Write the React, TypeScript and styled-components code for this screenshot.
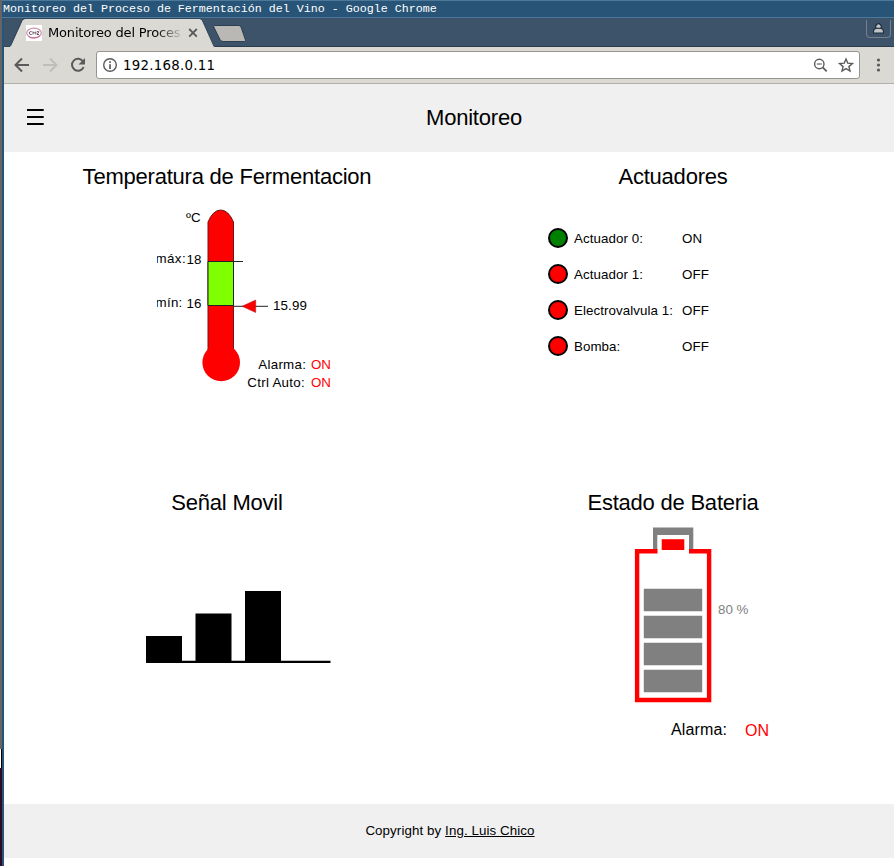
import React from "react";
import styled, { createGlobalStyle } from "styled-components";

const Global = createGlobalStyle`
  * { box-sizing: border-box; }
  html, body { margin: 0; padding: 0; overflow: hidden; }
  body { background: #fff; color: #000; font-family: "Liberation Sans", Arial, sans-serif; }
`;

const Desktop = styled.div`
  display: flex;
  width: 894px;
  height: 866px;
  overflow: hidden;
`;
const Backdrop = styled.div`
  display: flex;
  flex-direction: column;
  width: 2px;
  background: #656565;
`;
const BackdropPiece = styled.span<{ $height: number; $fill: string }>`
  height: ${(p) => p.$height}px;
  background: ${(p) => p.$fill};
`;
const Frame = styled.div`
  width: 892px;
  height: 866px;
  border-left: 2px solid #285577;
`;
const TitleBar = styled.div`
  height: 18px;
  margin-left: -2px;
  padding-left: 1px;
  border-top: 1px solid #4c7899;
  border-bottom: 1px solid #4c7899;
  background: #285577;
  color: #fff;
  font: 11.67px/16px "Liberation Mono", monospace;
  white-space: pre;
`;
const TabStrip = styled.div`
  display: flex;
  justify-content: space-between;
  height: 29px;
  background: #3d5369;
  border-bottom: 1px solid #293b4d;
`;
const Tabs = styled.div`
  display: grid;
  grid-template-columns: 250px;
  height: 29px;
  & > * { grid-area: 1 / 1; }
`;
const TabContent = styled.div`
  display: flex;
  align-items: center;
  height: 29px;
  padding-left: 22px;
`;
const TabTitle = styled.span`
  width: 134px;
  margin-left: 6px;
  white-space: nowrap;
  font: 13px/29px "DejaVu Sans", sans-serif;
  letter-spacing: -0.17px;
  mask-image: linear-gradient(to right, #000 108px, transparent 136px);
`;
const UserButton = styled.div`
  display: flex;
  justify-content: center;
  width: 25px;
  height: 18px;
  margin: 2px 3px 0 0;
  padding-top: 2px;
  border: 1px solid #75818e;
  border-top: 0;
  border-radius: 0 0 4px 4px;
`;
const Toolbar = styled.div`
  display: flex;
  align-items: center;
  height: 37px;
  padding-left: 8px;
  background: #dbd9d4;
  border-bottom: 1px solid #b3b1ad;
  & > * { flex-shrink: 0; }
`;
const AddressBar = styled.div`
  display: flex;
  align-items: center;
  width: 764px;
  height: 28px;
  margin-left: 8px;
  padding: 0 4px 0 5px;
  border: 1px solid #979591;
  border-radius: 3px;
  background: #fff;
`;
const Address = styled.span`
  flex: 1;
  margin-left: 5px;
  padding-top: 1px;
  font: 13.33px/26px "DejaVu Sans", sans-serif;
  letter-spacing: 0.27px;
`;
const Header = styled.header`
  display: flex;
  height: 68px;
  padding-left: 22px;
  background: #f0f0f0;
  line-height: 67px;
`;
const MenuButton = styled.span`
  display: flex;
  align-items: center;
  width: 28px;
`;
const PageTitle = styled.h1`
  flex: 1;
  margin: 0;
  font-size: 22px;
  font-weight: 400;
  letter-spacing: -0.22px;
  text-align: center;
`;
const Dashboard = styled.main`
  display: grid;
  grid-template-columns: 446px 446px;
  grid-template-rows: 326px 326px;
  height: 652px;
`;
const Panel = styled.section`
  display: flex;
  flex-direction: column;
  min-width: 0;
`;
const PanelTitle = styled.h2`
  margin: 0;
  height: 50px;
  font-size: 22px;
  font-weight: 400;
  letter-spacing: -0.22px;
  line-height: 49px;
  text-align: center;
`;
const Chart = styled.svg`
  display: block;
  width: 446px;
  height: 276px;
  overflow: visible;
  font-family: "Liberation Sans", Arial, sans-serif;
  font-size: 13.33px;
`;
const ActuatorList = styled.ul`
  margin: 0;
  padding: 18px 0 0 98px;
  list-style: none;
`;
const Actuator = styled.li`
  display: grid;
  grid-template-columns: 26px 108px 60px;
  align-items: center;
  height: 36px;
  font-size: 13.33px;
  letter-spacing: 0.07px;
`;
const Lamp = styled.span<{ $on: boolean }>`
  width: 20px;
  height: 20px;
  border: 2px solid #000;
  border-radius: 50%;
  background: ${(p) => (p.$on ? "#008000" : "#f00")};
`;
const Footer = styled.footer`
  height: 54px;
  padding-left: 2px;
  background: #f0f0f0;
  font-size: 13.33px;
  letter-spacing: 0.09px;
  line-height: 53px;
  text-align: center;
`;
const AuthorLink = styled.a`
  color: #000;
  text-decoration: underline;
`;

const actuators = [
  { name: "Actuador 0:", on: true },
  { name: "Actuador 1:", on: false },
  { name: "Electrovalvula 1:", on: false },
  { name: "Bomba:", on: false },
];

const TabShapes = () => (
  <svg width="250" height="29">
    <path d="M0 28H7L18.5 2.5Q19.5 1 21 1H195.5Q197.5 1 198 2.5L210.5 29H0Z" fill="#dbd9d4" />
    <path d="M0 28.5H6L18 2.5Q19 .5 21 .5H195.5Q197.5 .5 198.5 2.5L210 28.5" fill="none" stroke="#33475a" />
    <path d="M210.5 7.5H234.5Q236.5 7.5 237 9L241.5 22Q241.8 23.5 240.5 23.5H219Q217 23.5 216 21.5L209.8 9Q209.2 7.5 210.5 7.5Z" fill="#bab8b4" stroke="#2c3e50" />
  </svg>
);

const Favicon = () => (
  <svg width="16" height="16" viewBox="0 0 16 16">
    <path fill="#fff" d="M0 0h16v16H0z" />
    <ellipse cx="8" cy="8" rx="7.3" ry="4.8" fill="none" stroke="#cf8bad" strokeWidth="1.2" />
    <path d="M3 12 Q9 14.5 14 10.5" fill="none" stroke="#bd6b95" />
    <path d="M5.8 6.7H4.2Q3.3 6.7 3.3 8T4.2 9.5H5.8M7 9.5V6.7L8.4 8.2 9.8 6.7V9.5M11 6.7H13L11 9.5H13" fill="none" stroke="#5d4856" strokeWidth=".9" />
  </svg>
);

const NavIcons = () => (
  <svg width="76" height="36" viewBox="0 0 76 36" fill="none" stroke="#5a5a5a" strokeWidth="2">
    <path d="M17 18H4M10 11.5L3.5 18 10 24.5" />
    <path d="M31 18H44M38 11.5L44.5 18 38 24.5" stroke="#c0beba" />
    <path d="M71 14.5A6 6 0 1 0 71.6 20" />
    <path d="M73 11V17.5H66.5Z" fill="#5a5a5a" stroke="none" />
  </svg>
);

const Thermometer = () => (
  <Chart viewBox="0 0 446 276">
    <defs><clipPath id="labels"><path d="M153 0H446V276H153Z" /></clipPath></defs>
    <path d="M204 151V20Q209 8 216.7 8T229.5 20V151" fill="#f00" stroke="#6d1717" />
    <circle cx="217.2" cy="160.5" r="18.8" fill="#f00" />
    <path d="M204.6 146H229V155H204.6Z" fill="#f00" />
    <path d="M204 59.5H229.5V103.5H204Z" fill="#80ff00" stroke="#222" />
    <path d="M229 59.5H239M229 104.3H264" stroke="#222" />
    <path d="M238 104.3L251.7 98V110.5Z" fill="#f00" stroke="#a11" strokeWidth=".5" />
    <g clipPath="url(#labels)">
      <text x="182" y="20" letterSpacing=".2">ºC</text>
      <text x="151.5" y="61" letterSpacing=".4">máx:</text><text x="182.5" y="62">18</text>
      <text x="151.5" y="105" letterSpacing=".3">mín:</text><text x="182.5" y="106">16</text>
    </g>
    <text x="269" y="108" letterSpacing=".15">15.99</text>
    <text x="254.3" y="167" letterSpacing=".28">Alarma:</text><text x="307" y="167" fill="#f00">ON</text>
    <text x="243.3" y="185" letterSpacing=".28">Ctrl Auto:</text><text x="307" y="185" fill="#f00">ON</text>
  </Chart>
);

const Signal = () => (
  <Chart viewBox="0 0 446 276">
    <path d="M142 108H178V134H142ZM191.5 85.5H227.5V134H191.5ZM241 63H277V134H241Z" />
    <path d="M142 132.7H326.5V135H142Z" />
  </Chart>
);

const Battery = () => (
  <Chart viewBox="0 0 446 276">
    <path d="M203 22V-.5H243.3V22H239V7H207.3V22Z" fill="#808080" />
    <path d="M207.5 23.2H187.1V172H259.1V23.2H239" fill="none" stroke="#f00" strokeWidth="4.4" />
    <path d="M211.7 11.2H234.3V22H211.7Z" fill="#f00" />
    <path d="M193.8 60.7H252.2V83.3H193.8ZM193.8 87.7H252.2V110.3H193.8ZM193.8 114.7H252.2V137.3H193.8ZM193.8 141.7H252.2V164.3H193.8Z" fill="#808080" />
    <text x="268" y="86" fill="#808080">80 %</text>
    <text x="221" y="207" fontSize="16" letterSpacing=".12">Alarma:</text>
    <text x="295" y="208" fontSize="16" fill="#f00">ON</text>
  </Chart>
);

export default function App() {
  return (
    <Desktop>
      <Global />
      <Backdrop>
        <BackdropPiece $height={749} $fill="#656565" />
        <BackdropPiece $height={19} $fill="linear-gradient(to right, #fff 1px, #000 1px)" />
        <BackdropPiece $height={98} $fill="#300a24" />
      </Backdrop>
      <Frame>
        <TitleBar>Monitoreo del Proceso de Fermentación del Vino - Google Chrome</TitleBar>
        <TabStrip>
          <Tabs>
            <TabShapes />
            <TabContent>
              <Favicon />
              <TabTitle>Monitoreo del Proces</TabTitle>
              <svg width="20" height="20"><path d="M7.2 6L14.8 13.6M14.8 6L7.2 13.6" stroke="#5a5a5a" strokeWidth="1.8" /></svg>
            </TabContent>
          </Tabs>
          <UserButton>
            <svg width="13" height="13"><path d="M4.2 6.2a2.8 2.8 0 1 1 4.6 0Q11.5 6.8 11.5 9.5V11H1.5V9.5Q1.5 6.8 4.2 6.2Z" fill="#c1c4c7" stroke="#1d2d3d" strokeWidth="1.1" /><path d="M4.2 6.3H8.8" stroke="#1d2d3d" strokeWidth="1.1" /></svg>
          </UserButton>
        </TabStrip>
        <Toolbar>
          <NavIcons />
          <AddressBar>
            <svg width="16" height="16"><circle cx="8" cy="8" r="6.3" fill="none" stroke="#5a5a5a" strokeWidth="1.4" /><path d="M7.2 4.3h1.7V6H7.2ZM7.2 7.2h1.7V12H7.2Z" fill="#5a5a5a" /></svg>
            <Address>192.168.0.11</Address>
            <svg width="46" height="18" fill="none" stroke="#5a5a5a" strokeWidth="1.4"><circle cx="10.3" cy="8" r="4.7" /><path d="M7.8 8H12.8" strokeWidth="1.1" /><path d="M13.7 11.4L17.7 15.4" strokeWidth="1.8" /><path d="M37 3L38.8 7.2 43.4 7.6 39.9 10.6 41 15 37 12.6 33 15 34.1 10.6 30.6 7.6 35.2 7.2Z" /></svg>
          </AddressBar>
          <svg width="34" height="20" fill="#5a5a5a"><circle cx="18.5" cy="5" r="1.6" /><circle cx="18.5" cy="10" r="1.6" /><circle cx="18.5" cy="15" r="1.6" /></svg>
        </Toolbar>
        <Header>
          <MenuButton><svg width="20" height="20"><path d="M1 2H17.7M1 9H17.7M1 16H17.7" stroke="#000" strokeWidth="2" /></svg></MenuButton>
          <PageTitle>Monitoreo</PageTitle>
        </Header>
        <Dashboard>
          <Panel><PanelTitle>Temperatura de Fermentacion</PanelTitle><Thermometer /></Panel>
          <Panel>
            <PanelTitle>Actuadores</PanelTitle>
            <ActuatorList>
              {actuators.map((item) => (
                <Actuator key={item.name}>
                  <Lamp $on={item.on} />
                  <span>{item.name}</span>
                  <span>{item.on ? "ON" : "OFF"}</span>
                </Actuator>
              ))}
            </ActuatorList>
          </Panel>
          <Panel><PanelTitle>Señal Movil</PanelTitle><Signal /></Panel>
          <Panel><PanelTitle>Estado de Bateria</PanelTitle><Battery /></Panel>
        </Dashboard>
        <Footer>Copyright by <AuthorLink>Ing. Luis Chico</AuthorLink></Footer>
      </Frame>
    </Desktop>
  );
}
